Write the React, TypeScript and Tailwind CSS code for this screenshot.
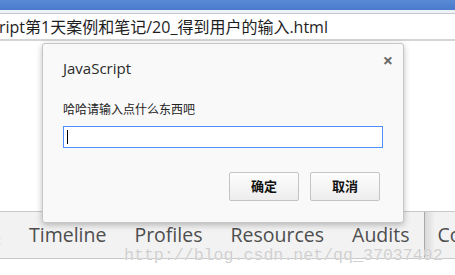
export default function App() {
  const tabs = ["Timeline", "Profiles", "Resources", "Audits"];

  return (
    <div className="relative w-[455px] h-[275px] overflow-hidden bg-white font-['Open_Sans','Noto_Sans_CJK_SC',sans-serif]">
      {/* window title strip */}
      <div className="h-[10px] bg-gradient-to-b from-[#5a8ad6] to-[#4a7bcc]" />
      <div className="h-[3px] bg-[#eef1f6]" />
      <div className="h-px bg-[#c4c8cf]" />

      {/* address bar */}
      <div className="h-[27px] bg-white flex items-center border-b-2 border-[#d4d4d4]">
        <span className="whitespace-nowrap text-[16px] leading-[20px] text-[#1e1e1e] -ml-px">
          ript第1天案例和笔记/20_得到用户的输入.html
        </span>
      </div>

      <div className="h-[170px]" />

      {/* devtools tab strip */}
      <div className="relative h-[48px] bg-[#f2f2f2] border-y border-[#c9c9c9] flex items-center">
        <span className="absolute left-[-4px] top-[20px] text-[16px] leading-none text-[#6aaef0]">‹</span>
        <div className="flex items-center pl-[29px] gap-[28px] text-[19.5px] leading-[24px] text-[#4e4e4e] -mt-[1px]">
          {tabs.map((t) => (
            <span key={t}>{t}</span>
          ))}
        </div>
        <div className="ml-[15px] h-full flex items-center">
          <div className="w-px h-full bg-[#a8a8a8]" />
          <div className="w-[10px] h-full bg-gradient-to-r from-[#d8d8d8] to-[#f2f2f2]" />
          <span className="text-[19.5px] leading-[24px] text-[#4e4e4e] -mt-[1px] ml-[2px]">Co</span>
        </div>
        <span className="absolute left-[124px] top-[34px] whitespace-nowrap font-['Liberation_Mono',monospace] text-[16.6px] leading-[20px] text-[#cfcfcf] [text-shadow:0_0_1px_#fff]">
          http://blog.csdn.net/qq_37037492
        </span>
      </div>

      {/* prompt dialog */}
      <div className="absolute left-[42px] top-[43px] w-[362px] rounded-[3px] border border-[#c6c6c6] bg-[#f9f9f9] shadow-[0_2px_6px_rgba(0,0,0,0.25)] px-[20px] pt-[14px] pb-[21px]">
        <span className="absolute right-[10px] top-[7px] text-[18px] leading-none font-bold text-[#6b6b6b]">×</span>
        <div className="text-[15px] leading-[20px] text-[#2a2a2a]">JavaScript</div>
        <div className="mt-[24px] text-[12px] leading-[16px] text-[#222]">哈哈请输入点什么东西吧</div>
        <div className="mt-[8px] w-[320px] h-[22px] border border-[#4d90fe] bg-white flex items-center pl-[3px]">
          <div className="w-px h-[14px] bg-black" />
        </div>
        <div className="mt-[24px] flex justify-end gap-[11px] pr-[3px]">
          <button className="w-[70px] h-[29px] rounded-[2px] border border-[#c4c4c4] bg-gradient-to-b from-[#fdfdfd] to-[#ededed] text-[13px] text-[#111] font-semibold">
            确定
          </button>
          <button className="w-[70px] h-[29px] rounded-[2px] border border-[#c4c4c4] bg-gradient-to-b from-[#fdfdfd] to-[#ededed] text-[13px] text-[#111] font-semibold">
            取消
          </button>
        </div>
      </div>
    </div>
  );
}
